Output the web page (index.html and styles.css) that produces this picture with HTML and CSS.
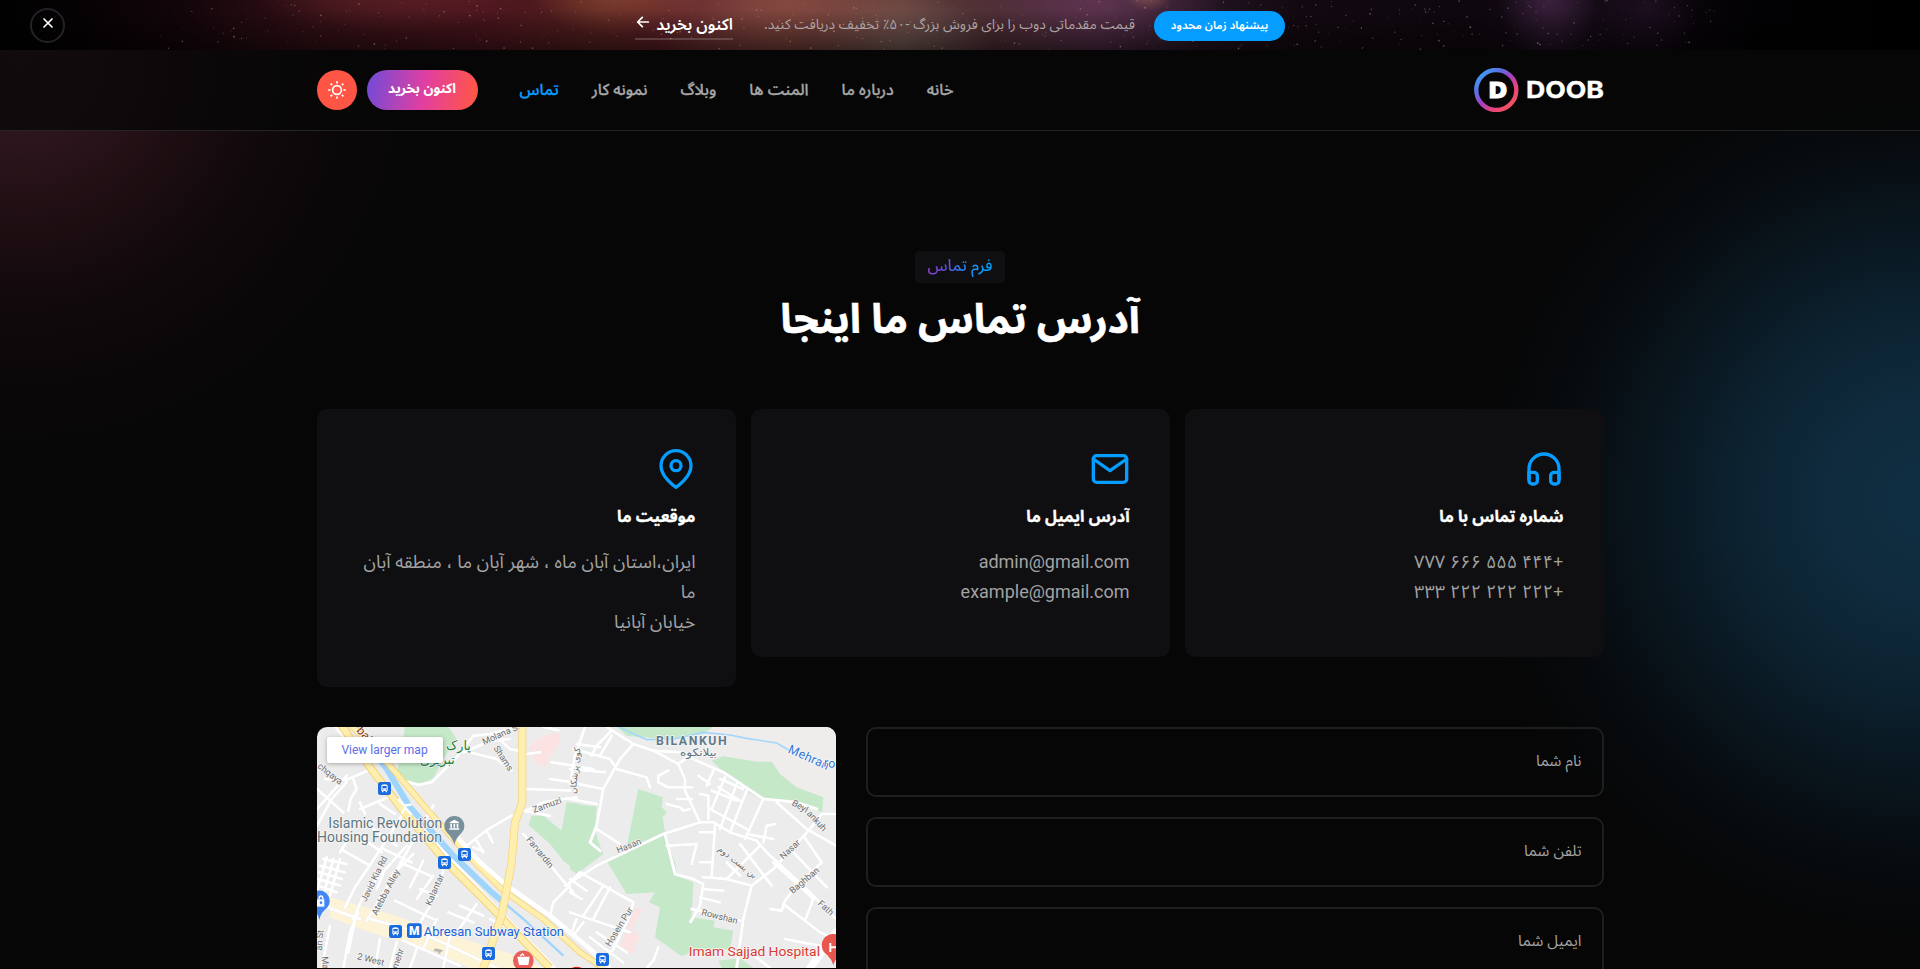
FILE: index.html
```html
<!DOCTYPE html>
<html lang="fa" dir="rtl">
<head>
<meta charset="utf-8">
<title>DOOB</title>
<link rel="stylesheet" href="styles.css">
</head>
<body>
<div class="page">
  <div class="promo">
    <svg class="promo-stars" viewBox="0 0 1920 50" aria-hidden="true"></svg>
    <span class="promo-badge">پیشنهاد زمان محدود</span>
    <span class="promo-text">قیمت مقدماتی دوب را برای فروش بزرگ -۵۰٪ تخفیف دریافت کنید.</span>
    <a class="promo-link">اکنون بخرید
      <svg width="16" height="16" viewBox="0 0 24 24"><path d="M20 12H4M11 5l-7 7 7 7"/></svg>
    </a>
    <button class="promo-close"><svg width="16" height="16" viewBox="0 0 24 24"><path d="M18 6 6 18M6 6l12 12"/></svg></button>
  </div>

  <header class="header">
    <div class="container header-row">
      <svg class="logo" width="130" height="44" viewBox="0 0 130 44">
        <defs>
          <linearGradient id="ring" x1="0.1" y1="0.1" x2="0.85" y2="0.9">
            <stop offset="0" stop-color="#3f9df5"/><stop offset=".25" stop-color="#5c6fe0"/>
            <stop offset=".5" stop-color="#a53fc4"/><stop offset=".75" stop-color="#e2437f"/><stop offset="1" stop-color="#f25161"/>
          </linearGradient>
        </defs>
        <circle cx="22.3" cy="22" r="20" fill="none" stroke="url(#ring)" stroke-width="4.4"/>
        <text class="logo-mark" x="15" y="30" textLength="18" lengthAdjust="spacingAndGlyphs">D</text>
        <text class="logo-word" x="52" y="30.3" textLength="78" lengthAdjust="spacingAndGlyphs">DOOB</text>
      </svg>
      <nav class="nav">
        <a>خانه</a><a>درباره ما</a><a>المنت ها</a><a>وبلاگ</a><a>نمونه کار</a><a class="active">تماس</a>
      </nav>
      <div class="actions">
        <a class="cta">اکنون بخرید</a>
        <button class="theme">
          <svg width="20" height="20" viewBox="0 0 20 20"><circle cx="10" cy="10" r="4.4"/><path d="M10 1.2v2.4M10 16.4v2.4M1.2 10h2.4M16.4 10h2.4M3.6 3.6l1.6 1.6M14.8 14.8l1.6 1.6M16.4 3.6l-1.6 1.6M5.2 14.8l-1.6 1.6"/></svg>
        </button>
      </div>
    </div>
  </header>

  <main class="container">
    <div class="title">
      <span class="eyebrow"><span>فرم تماس</span></span>
      <h1>آدرس تماس ما اینجا</h1>
    </div>

    <div class="cards">
      <div class="card">
        <svg class="icon" viewBox="0 0 24 24"><path d="M3 18v-6a9 9 0 0 1 18 0v6"/><path d="M21 19a2 2 0 0 1-2 2h-1a2 2 0 0 1-2-2v-3a2 2 0 0 1 2-2h3zM3 19a2 2 0 0 0 2 2h1a2 2 0 0 0 2-2v-3a2 2 0 0 0-2-2H3z"/></svg>
        <h2>شماره تماس با ما</h2>
        <p>+۴۴۴ ۵۵۵ ۶۶۶ ۷۷۷</p>
        <p>+۲۲۲ ۲۲۲ ۲۲۲ ۳۳۳</p>
      </div>
      <div class="card">
        <svg class="icon" viewBox="0 0 24 24"><path d="M4 4h16c1.1 0 2 .9 2 2v12c0 1.100-.9 2-2 2H4c-1.100 0-2-.9-2-2V6c0-1.100.9-2 2-2z"/><path d="m22 6-10 7L2 6"/></svg>
        <h2>آدرس ایمیل ما</h2>
        <p class="latin">admin@gmail.com</p>
        <p class="latin">example@gmail.com</p>
      </div>
      <div class="card">
        <svg class="icon" viewBox="0 0 24 24"><path d="M21 10c0 7-9 13-9 13s-9-6-9-13a9 9 0 0 1 18 0z"/><circle cx="12" cy="10" r="3"/></svg>
        <h2>موقعیت ما</h2>
        <p>ایران،استان آبان ماه ، شهر آبان ما ، منطقه آبان ما</p>
        <p>خیابان آبانیا</p>
      </div>
    </div>

    <div class="contact">
      <form class="form">
        <input placeholder="نام شما">
        <input placeholder="تلفن شما">
        <input placeholder="ایمیل شما">
      </form>
      <div class="map" dir="ltr">
        <svg width="519" height="241" viewBox="21 24 1557 723">
          <defs>
            <g id="bus"><rect width="39" height="39" rx="7" fill="#1a6be0"/><path d="M10 12q0-5 9.500-5t9.500 5v15H10z" fill="#fff"/><path d="M13 12h13v7H13z" fill="#1a6be0"/><circle cx="14.500" cy="23" r="1.800" fill="#1a6be0"/><circle cx="24.500" cy="23" r="1.800" fill="#1a6be0"/><path d="M12 27h4v4h-4zM23 27h4v4h-4z" fill="#fff"/></g>
          </defs>
          <rect x="21" y="24" width="1557" height="723" fill="#ececed"/>
          <path class="sand" d="M1060 24H1578V280L1540 230 1450 215 1390 130 1240 115 1130 85z"/>
          <path class="park" d="M285 24H415L440 60 400 120 370 178 330 195 283 182 262 160z"/>
          <path class="park" d="M770 250 810 255V465L760 425 720 375 656 318 665 290 700 290 755 335zM780 255 860 262 855 335 870 380 880 405 800 465 780 450z"/>
          <path class="park" d="M985 210 1058 235 1055 265 1070 280 1058 295 1068 360 1095 430 1100 470 1150 490 1145 595 1215 605 1210 625 1270 635 1260 690 1165 690 1115 712 1035 655 1050 565 1017 550 1035 520 950 525 890 425 950 385z"/>
          <path class="park" d="M920 24H1210L1180 45 1090 60 1000 55 950 50zM1205 125 1240 112 1340 128 1385 128 1410 165 1460 205 1540 235 1537 280 1500 265 1450 245 1360 245 1290 205zM1225 725 1290 718 1330 747H1235z"/>
          <path class="pink" d="M655 85 690 55 745 38 750 70 720 115 705 145 680 135 665 105zM975 565 1000 572 962 630 990 650 970 705 925 690z"/>
          <path class="yellow-area" d="M60 535 240 585 430 650 620 710 700 747H480L380 700 180 640 60 595z"/>
          <path class="stream" d="M930 24 960 40 1010 62 1090 60 1180 40 1260 48 1310 58 1400 72 1440 95"/>

          <g class="roads">
            <path d="M21 210 60 245 100 280M45 180 80 185 110 182 175 155M130 180 140 210 122 240 115 275M21 270 110 170M150 270 235 235M150 250 165 285M210 255 255 285M21 320 65 240 110 190"/>
            <path d="M280 185 325 198 365 190 400 155 440 115 490 50 540 45 625 24M460 100 520 75M480 100 560 120 605 155M540 65 600 60M550 45 600 90 625 95"/>
            <path d="M650 210 800 215M648 275 700 250 800 235M700 24 745 34M650 105 690 100M720 180 790 190M725 130 850 150"/>
            <path d="M470 380 535 330 605 290 625 290M490 385 515 395M530 335 548 370M500 365 520 400"/>
            <path d="M105 565 135 505 205 400 275 290M130 600 165 520 290 380M170 605 245 480 290 400 370 260M115 700 140 580M100 747 120 640 145 580M180 600 330 640 440 690 560 747"/>
            <path d="M40 420 110 435M30 440 105 460M28 460 95 480M25 480 90 500M25 500 80 520M50 415 20 520M70 420 40 530M90 420 60 530M21 540 65 570 150 600"/>
            <path d="M100 395 180 440M140 345 215 400M190 330 260 380M115 360 90 400M220 390 305 430M270 430 360 470M310 405 245 470M340 425 300 505M370 470 320 540M255 545 370 600M330 510 380 530M220 465 200 510"/>
            <path d="M400 455 360 560 325 620M415 580 490 610M450 560 520 590M500 555 440 640M540 600 600 630M380 600 340 690M260 670 240 747M210 660 195 747M280 665 450 740M420 650 400 747M320 690 300 747M60 620 35 747"/>
            <path d="M640 345 690 400 755 480 790 520M765 500 860 440 1060 345 1170 310 1210 310 1260 340 1340 365 1370 400 1500 520 1578 600"/>
            <path d="M640 275 720 290M825 24 795 110 780 200M720 590 730 550 780 500M905 35 860 80 845 110"/>
            <path d="M890 24 970 75 1030 95 1110 100 1160 125 1240 160 1360 240 1460 250 1520 270"/>
            <path d="M970 75 930 120 880 210 860 320 840 370 870 395M860 330 930 375M790 90 900 120 920 150 1010 175 1020 205M780 150 885 160M780 190 880 210M780 240 860 255M870 110 905 50M800 75 870 85"/>
            <path d="M1030 95 1105 135 1125 180 1125 215 1170 310M1075 155 1045 170 1045 190 1075 205 1145 205M1105 135 1140 110M1100 240 1145 240M1070 255 1110 265 1120 275 1140 270M1170 225 1195 230V300"/>
            <path d="M1210 155 1190 200M1245 175 1205 270M1280 195 1230 330M1310 215 1260 340M1360 240 1305 360M1205 215 1280 245M1200 270 1310 330M1230 180 1300 210M1165 170 1200 195M1225 205 1290 245"/>
            <path d="M1215 320 1205 470M1170 340 1215 340M1170 430 1205 430M1065 345 1095 465 1150 480 1180 495 1170 560 1142 608M1180 475 1250 480 1325 500 1300 600 1280 747M1070 380 1160 375 1145 435M1180 510 1240 515M1170 535 1230 550M1145 570 1290 605"/>
            <path d="M1325 500 1390 450 1500 330 1535 285 1578 285M1400 250 1490 330 1578 380M1480 350 1535 430 1460 500 1425 545 1415 575 1380 570M1440 390 1550 505M1390 430 1510 540 1485 605M1420 555 1530 640 1578 660M1290 375 1385 500M1350 380 1250 480M1360 370 1370 320 1395 315M1310 345 1390 360M1250 430 1290 470"/>
            <path d="M780 490 810 460 970 550 960 590 910 690 885 720M900 505 850 600M880 500 820 590M780 480 830 515M780 520 815 540M780 580 960 640M800 600 785 640M820 610 790 650M840 655 940 730M860 640 950 700M1045 685 1030 725 1010 747M1425 660 1578 690M1320 700 1380 747"/>
            <path class="wide" d="M1578 640 1500 747"/>
          </g>

          <path class="white-road" d="M70 10 200 175 280 265 400 400 560 570 720 735 740 760"/>
          <path class="canal" d="M125 10 230 150 300 265 430 410 545 520 575 545"/>
          <path class="canal narrow" d="M575 545 640 600 760 710"/>
          <path class="highway-edge" d="M88 10 180 145 275 270 400 420 530 550 720 747"/>
          <path class="highway" d="M88 10 180 145 275 270 400 420 530 550 720 747"/>
          <path class="highway-edge thin" d="M115 10 240 140 350 270 480 415 580 515 700 600 810 700 880 747"/>
          <path class="highway thin" d="M115 10 240 140 350 270 480 415 580 515 700 600 810 700 880 747"/>
          <path class="white-road" d="M415 325 510 430 590 500 720 590 840 690 900 747"/>
          <path class="highway-edge" d="M637 10 637 250 615 310 605 430 575 590 520 747"/>
          <path class="highway big" d="M637 10 637 250 615 310 605 430 575 590 520 747"/>
          <path class="bridge" d="m265 240 18 20 22-4M275 285l10-20 20 22"/>

          <g class="street">
            <text x="21" y="145" transform="rotate(38 21 145)">chqaya</text>
            <text x="522" y="78" transform="rotate(-24 522 78)">Molana S.</text>
            <text x="550" y="88" transform="rotate(57 550 88)">Shams</text>
            <text x="672" y="282" transform="rotate(-20 672 282)">Zamuzi</text>
            <text x="648" y="362" transform="rotate(51 648 362)">Farvardin</text>
            <text x="168" y="550" transform="rotate(-64 168 550)">Javid Kia Rd</text>
            <text x="200" y="590" transform="rotate(-62 200 590)">Atebba Alley</text>
            <text x="362" y="562" transform="rotate(-66 362 562)">Kalantar</text>
            <text x="140" y="720" transform="rotate(14 140 720)">2 West</text>
            <text x="258" y="765" transform="rotate(-72 258 765)">gmehr</text>
            <text x="35" y="713" transform="rotate(85 35 713)">Ma</text>
            <text x="36" y="695" transform="rotate(-86 36 695)">an St</text>
            <text x="797" y="225" transform="rotate(-84 797 225)" class="fa">کوی پزشکان</text>
            <text x="924" y="403" transform="rotate(-22 924 403)">Hasan</text>
            <text x="900" y="684" transform="rotate(-58 900 684)">Hosein Pur</text>
            <text x="1173" y="588" transform="rotate(14 1173 588)">Rowshan</text>
            <text x="1222" y="393" transform="rotate(38 1222 393)" class="fa">بن بست دوم</text>
            <text x="1444" y="257" transform="rotate(30 1444 257)">Beyl</text>
            <text x="1489" y="285" transform="rotate(47 1489 285)">ankuh</text>
            <text x="1420" y="422" transform="rotate(-43 1420 422)">Nasar</text>
            <text x="1448" y="525" transform="rotate(-40 1448 525)">Baghban</text>
            <text x="1522" y="556" transform="rotate(42 1522 556)">Fath</text>
          </g>
          <text class="maroon" x="138" y="36" transform="rotate(48 138 36)">bai</text>
          <text class="park-name fa" x="408" y="94">پارک</text>
          <text class="park-name fa" x="330" y="136">تبریزی</text>
          <text class="district" x="1038" y="78">BILANKUH</text>
          <text class="district-fa fa" x="1110" y="112" textLength="110" lengthAdjust="spacingAndGlyphs">بیلانکوه</text>
          <text class="river" x="1432" y="100" transform="rotate(24 1432 100)">Mehran</text>
          <text class="river" x="1540" y="142" transform="rotate(10 1540 142)">ro</text>
          <text class="place" x="55" y="327" textLength="342" lengthAdjust="spacingAndGlyphs">Islamic Revolution</text>
          <text class="place" x="21" y="369" textLength="375" lengthAdjust="spacingAndGlyphs">Housing Foundation</text>
          <text class="station" x="341" y="650" textLength="421" lengthAdjust="spacingAndGlyphs">Abresan Subway Station</text>
          <text class="hospital" x="1136" y="712" textLength="394" lengthAdjust="spacingAndGlyphs">Imam Sajjad Hospital</text>

          <path d="M433 377q-4-18-19-33a30 30 0 1 1 38 0q-15 15-19 33z" fill="#78909c"/>
          <path d="m433 302-14 8v3h28v-3zM421 315h5v11h-5zM430.500 315h5v11h-5zM440 315h5v11h-5zM418 328h30v4h-30z" fill="#fff"/>
          <path d="M28 603q-3-18-18-32a31 31 0 1 1 36 0q-15 14-18 32z" fill="#4285f4"/>
          <path d="M21 541h22v22H21z" fill="#fff"/><path d="M27 541q0-10 6-10t6 10" fill="none" stroke="#fff" stroke-width="4"/><circle cx="33" cy="551" r="4" fill="#4285f4"/>
          <use href="#bus" x="204" y="189"/><use href="#bus" x="444" y="387"/><use href="#bus" x="384" y="411"/>
          <use href="#bus" x="237" y="618"/><use href="#bus" x="516" y="684"/><use href="#bus" x="858" y="702"/>
          <rect x="291" y="613" width="44" height="44" rx="8" fill="#1a6be0"/><text class="metro" x="297" y="648">M</text>
          <path d="M640 770q-8-12-21-22a31 31 0 1 1 42 0q-13 10-21 22z" fill="#e8615b"/>
          <path d="M622 713h37l-4 25h-28z" fill="#fff"/><path d="m630 711 8-6 4 6" fill="none" stroke="#fff" stroke-width="4"/>
          <path d="M1570 738q-4-16-18-30a34 34 0 1 1 40-4q-18 18-22 34z" fill="#e8564e"/>
          <path d="M1561 672v27M1561 685h17" stroke="#fff" stroke-width="6" fill="none"/>
          <path d="M785 747q15-7 30 0z" fill="#d93025"/>
          <path d="m376 688 24 6-14 12-2-8-14-2z" fill="#b8b8b0"/>
        </svg>
        <a class="map-link">View larger map</a>
      </div>
    </div>
  </main>
</div>
<script src="stars.js"></script>
</body>
</html>
```
FILE: styles.css
```css
* { box-sizing: border-box; }
body {
  margin: 0;
  background: #060606;
  color: #fff;
  font-family: "Noto Sans Arabic", Roboto, "DejaVu Sans", sans-serif;
  font-size: 16px;
}
button { border: 0; padding: 0; cursor: pointer; font: inherit; color: inherit; }
.page {
  height: 969px;
  overflow: hidden;
  display: flex;
  flex-direction: column;
  background:
    radial-gradient(circle 470px at 1925px 500px, #102f43 0%, #0f2b3d 20%, #0c2230 40%, #09151d 60%, #070b0e 78%, #060708 90%, transparent 100%),
    radial-gradient(circle 430px at 20px 55px, #351924 0%, #321823 10%, #2b141b 22%, #1c0d11 42%, #10090c 60%, #0a0708 78%, transparent 100%),
    #060606;
}
.container { width: 1287px; margin: 0 auto; }

/* promo strip */
.promo {
  position: relative;
  flex: none;
  height: 50px;
  display: flex;
  align-items: center;
  justify-content: center;
  background:
    linear-gradient(180deg, transparent 20%, rgba(0,0,0,.5) 100%),
    radial-gradient(ellipse 90px 50px at 618px -14px, #a8603c99, transparent),
    radial-gradient(ellipse 150px 60px at 395px -24px, #84343588, transparent),
    radial-gradient(ellipse 160px 80px at 790px 4px, #9a564888, transparent),
    radial-gradient(ellipse 90px 50px at 900px 44px, #7d716b88, transparent),
    radial-gradient(ellipse 130px 70px at 1100px 0, #7c446877, transparent),
    radial-gradient(ellipse 24px 14px at 1148px -3px, #b07a5088, transparent),
    radial-gradient(ellipse 50px 75px at 1548px -8px, #57305a99, transparent),
    radial-gradient(ellipse 50px 60px at 1648px 10px, #26132a99, transparent),
    linear-gradient(90deg, #010102 0, #050204 70px, #12050a 180px, #341016 320px, #48141d 480px, #54201f 600px, #5a1e26 660px, #6b3634 760px, #603f3c 900px, #4c2c33 1000px, #43253a 1100px, #211321 1210px, #120910 1300px, #0e070e 1480px, #180d1a 1560px, #0a050b 1680px, #020103 1760px, #000 1920px);
}
.promo-stars { position: absolute; inset: 0; width: 1920px; height: 50px; }
.promo-badge {
  position: relative;
  width: 131px; height: 30px;
  margin-top: 2px;
  border-radius: 15px;
  background: #059dff;
  font-size: 11.300px; font-weight: 600; line-height: 28px;
  text-align: center; white-space: nowrap;
}
.promo-text { position: relative; margin-right: 19px; width: 372px; font-size: 13.900px; line-height: 24px; color: #aea3a4; white-space: nowrap; }
.promo-link {
  position: relative;
  margin-right: 30px; margin-top: 2px;
  width: 98px; height: 28px;
  display: flex; justify-content: space-between; align-items: center;
  border-bottom: 2px solid rgba(255,255,255,.17);
  font-size: 16px; font-weight: 600; line-height: 26px; white-space: nowrap;
}
.promo-link svg, .promo-close svg { fill: none; stroke: #fff; stroke-width: 2.6; stroke-linecap: round; stroke-linejoin: round; }
.promo-link svg { margin-bottom: 6px; }
.promo-close {
  position: absolute; left: 30px; top: 8px;
  width: 35px; height: 35px; border-radius: 50%;
  background: transparent; border: 2px solid #242226;
  display: flex; align-items: center; justify-content: center;
}
.promo-close svg { margin-bottom: 5px; }

/* header */
.header { flex: none; height: 81px; background: rgba(6,6,6,.76); border-bottom: 1px solid #242424; }
.header-row { display: flex; align-items: center; height: 80px; }
.logo-mark { font: 900 22px Inter, sans-serif; fill: #fff; stroke: #fff; stroke-width: .8px; direction: ltr; }
.logo-word { font: 700 23.500px Inter, sans-serif; fill: #fff; stroke: #fff; stroke-width: .4px; direction: ltr; }
.logo { direction: ltr; }
.nav { display: flex; gap: 33px; margin-right: auto; margin-left: 42px; font-weight: 500; font-size: 15.900px; line-height: 29px; color: #a7a7a7; -webkit-text-stroke: .3px; }
.nav .active { color: #059dff; }
.actions { display: flex; gap: 10px; }
.cta {
  width: 111px; height: 40px; border-radius: 20px;
  background: linear-gradient(100deg, #6f4bd8 0%, #e23fa0 52%, #ff5549 95%);
  font-size: 13.700px; font-weight: 700; line-height: 38px; text-align: center;
}
.theme { width: 40px; height: 40px; border-radius: 50%; background: #ff5544; display: flex; align-items: center; justify-content: center; }
.theme svg { fill: none; stroke: #fff; stroke-width: 1.7; }

/* section title */
.title { display: flex; flex-direction: column; align-items: center; padding-top: 120px; height: 278px; }
.eyebrow { width: 90px; height: 32px; border-radius: 4px; background: #0f0f11; text-align: center; line-height: 30px; font-weight: 500; }
.eyebrow span { background: linear-gradient(270deg, #059dff 10%, #1c8cf5 40%, #6549d5 75%, #8a42cc 100%); -webkit-background-clip: text; background-clip: text; color: transparent; }
h1 { margin: 4px 0 0; font-size: 40.500px; font-weight: 700; line-height: 66px; white-space: nowrap; -webkit-text-stroke: .6px #fff; }

/* info cards */
.cards { display: grid; grid-template-columns: repeat(3, 419px); gap: 15px; align-items: start; }
.card { background: #0f0f11; border-radius: 10px; padding: 40px 40px 50px; }
.icon { display: block; width: 40px; height: 40px; fill: none; stroke: #059dff; stroke-width: 2; stroke-linecap: round; stroke-linejoin: round; }
.card h2 { margin: 13px 0 15px; font-size: 16.100px; font-weight: 700; line-height: 30px; -webkit-text-stroke: .3px #fff; }
.card p { margin: 0; font-size: 18.200px; line-height: 30px; color: #a2a2a2; }
.card .latin { font-family: Roboto, sans-serif; font-size: 18px; }

/* form and map */
.contact { display: flex; justify-content: space-between; margin-top: 40px; }
.form { width: 738px; display: flex; flex-direction: column; gap: 20px; }
.form input {
  height: 70px; padding: 0 20px 2px; outline: 0;
  background: transparent; border: 2px solid #1e1e1f; border-radius: 10px;
  font: 15.400px "Noto Sans Arabic", "DejaVu Sans", sans-serif; color: #a2a2a2;
}
.form input::placeholder { color: #a2a2a2; opacity: 1; }
.map { position: relative; width: 519px; height: 241px; border-radius: 10px 10px 0 0; overflow: hidden; }
.map svg { display: block; }
.map-link {
  position: absolute; left: 10px; top: 10px; width: 116px; height: 26px;
  background: #fff; border-radius: 2px; box-shadow: 0 1px 4px rgba(0,0,0,.3);
  font: 12px/26px Roboto, sans-serif; text-align: center; color: #5b6ee8;
}

/* map drawing */
.sand { fill: #efedec; }
.park { fill: #c5e8c8; }
.pink { fill: #fbe3e3; }
.yellow-area { fill: #fdf4d8; }
.stream { fill: none; stroke: #a4d6fb; stroke-width: 5; }
.roads { fill: none; stroke: #fff; stroke-width: 9; stroke-linejoin: round; stroke-linecap: round; filter: drop-shadow(0 0 1px #cfd2d6); }
.roads .wide { stroke-width: 24; }
.white-road { fill: none; stroke: #fff; stroke-width: 14; }
.canal { fill: none; stroke: #9fd5fb; stroke-width: 18; }
.canal.narrow { stroke-width: 7; }
.highway, .highway-edge { fill: none; stroke-linejoin: round; }
.highway-edge { stroke: #f5d176; stroke-width: 24; }
.highway { stroke: #feefae; stroke-width: 18; }
.highway-edge.thin { stroke-width: 19; }
.highway.thin { stroke-width: 14; }
.highway.big { stroke-width: 20; }
.bridge { fill: none; stroke: #fff; stroke-width: 7; }
.map text { font-family: Roboto, "Noto Sans Arabic", sans-serif; paint-order: stroke; stroke: #f6f6f6; stroke-width: 5px; stroke-linejoin: round; }
.map text.fa { font-family: "DejaVu Sans", sans-serif; }
.street { font-size: 27px; fill: #6c6c6c; }
.street .fa { font-size: 26px; }
.maroon { font-size: 36px; fill: #8a3b12; }
.park-name { font-size: 38px; fill: #188038; }
.district { font-size: 37px; font-weight: 700; letter-spacing: 4.600px; fill: #5f7a8b; }
.district-fa { font-size: 32px; fill: #5f727e; }
.map .river { font-size: 37px; fill: #3576d8; letter-spacing: 1px; }
.place { font-size: 42px; fill: #5c7682; }
.station { font-size: 38px; fill: #1a62d6; }
.hospital { font-size: 41px; fill: #d93a32; }
.map .metro { font-size: 36px; font-weight: 900; fill: #fff; stroke: none; }
```
FILE: stars.js
```js
const field = document.querySelector('.promo-stars');
let seed = 7;
const next = () => (seed = (seed * 16807) % 2147483647) / 2147483647;
for (let i = 0; i < 420; i++) {
  const star = document.createElementNS('http://www.w3.org/2000/svg', 'circle');
  const x = 160 + next() * 1560;
  star.setAttribute('cx', x);
  star.setAttribute('cy', next() * 50);
  star.setAttribute('r', 0.4 + next() * 0.5);
  star.setAttribute('fill', x > 1300 ? '#cfc6dd' : '#d8b49a');
  star.setAttribute('opacity', 0.1 + next() * 0.35);
  field.append(star);
}
```
